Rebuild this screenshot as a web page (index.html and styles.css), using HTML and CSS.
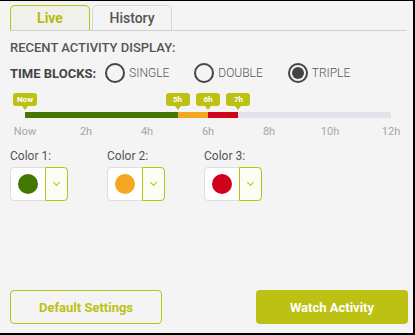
FILE: index.html
```html
<!DOCTYPE html>
<html lang="en">
  <head>
    <meta charset="UTF-8" />
    <meta name="viewport" content="width=device-width, initial-scale=1.0" />
    <title>Activity Display</title>
    <link rel="stylesheet" href="styles.css">
  </head>
  <body>
    <div class="panel">
      <div class="tabs">
        <div class="tab active">Live</div>
        <div class="tab">History</div>
      </div>

      <h3 class="section-title">RECENT ACTIVITY DISPLAY:</h3>

      <div class="blocks-row">
        <span class="blocks-label">TIME BLOCKS:</span>
        <label class="radio"><span class="circle"></span>SINGLE</label>
        <label class="radio"><span class="circle"></span>DOUBLE</label>
        <label class="radio checked"><span class="circle"></span>TRIPLE</label>
      </div>

      <div class="timeline">
        <div class="tags">
          <span class="tag" style="left: 0%">Now</span>
          <span class="tag" style="left: 41.667%">5h</span>
          <span class="tag" style="left: 50%">6h</span>
          <span class="tag" style="left: 58.333%">7h</span>
        </div>
        <div class="bar">
          <div class="seg green" style="width: 41.667%"></div>
          <div class="seg orange" style="width: 8.333%"></div>
          <div class="seg red" style="width: 8.333%"></div>
        </div>
        <div class="ticks">
          <span>Now</span>
          <span>2h</span>
          <span>4h</span>
          <span>6h</span>
          <span>8h</span>
          <span>10h</span>
          <span>12h</span>
        </div>
      </div>

      <div class="colors">
        <div class="color-group">
          <div class="color-label">Color 1:</div>
          <div class="picker">
            <div class="swatch"><span class="dot green"></span></div>
            <div class="drop"><span class="chev"></span></div>
          </div>
        </div>
        <div class="color-group">
          <div class="color-label">Color 2:</div>
          <div class="picker">
            <div class="swatch"><span class="dot orange"></span></div>
            <div class="drop"><span class="chev"></span></div>
          </div>
        </div>
        <div class="color-group">
          <div class="color-label">Color 3:</div>
          <div class="picker">
            <div class="swatch"><span class="dot red"></span></div>
            <div class="drop"><span class="chev"></span></div>
          </div>
        </div>
      </div>

      <div class="actions">
        <button class="btn outline">Default Settings</button>
        <button class="btn solid">Watch Activity</button>
      </div>
    </div>
  </body>
</html>
```

FILE: styles.css
```css
* {
  margin: 0;
  padding: 0;
  box-sizing: border-box;
}

body {
  font-family: Roboto, 'Liberation Sans', sans-serif;
  background-color: #f4f4f4;
  color: #555;
}

.panel {
  width: 415px;
  height: 335px;
  border-top: 1px solid #000;
  border-right: 2px solid #000;
  border-bottom: 2px solid #000;
  padding: 4px 5px 9px 10px;
  display: flex;
  flex-direction: column;
}

.tabs {
  display: flex;
  gap: 2px;
  border-bottom: 1px solid #d0d0d0;
  margin-right: 1px;
}

.tab {
  width: 80px;
  height: 25px;
  border: 1px solid #d6d6d6;
  border-bottom: none;
  border-radius: 5px 5px 0 0;
  font-size: 14px;
  font-weight: 500;
  color: #555;
  display: flex;
  align-items: center;
  justify-content: center;
}

.tab.active {
  border-color: #bdc114;
  border-width: 1.5px;
  background-color: #f0f1ea;
  color: #b5bb12;
  font-weight: 700;
}

.section-title {
  font-size: 13px;
  font-weight: 500;
  color: #555;
  margin-top: 9px;
}

.blocks-row {
  display: flex;
  align-items: center;
  margin-top: 8px;
  height: 20px;
}

.blocks-label {
  font-size: 13px;
  font-weight: 700;
  color: #444;
  margin-right: 9px;
}

.radio {
  display: flex;
  align-items: center;
  gap: 4px;
  font-size: 12px;
  font-weight: 300;
  color: #555;
  margin-right: 25px;
}

.circle {
  width: 20px;
  height: 20px;
  border: 2px solid #444;
  border-radius: 50%;
  display: flex;
  align-items: center;
  justify-content: center;
}

.radio.checked .circle::after {
  content: "";
  width: 12px;
  height: 12px;
  border-radius: 50%;
  background-color: #444;
}

.timeline {
  margin: 10px 17px 0 15px;
}

.tags {
  position: relative;
  height: 19px;
}

.tag {
  position: absolute;
  top: 0;
  transform: translateX(-50%);
  width: 24px;
  height: 13px;
  line-height: 13px;
  border-radius: 3px;
  background-color: #bdc114;
  color: #fff;
  font-size: 8px;
  font-weight: 700;
  text-align: center;
}

.tag::after {
  content: "";
  position: absolute;
  left: 50%;
  bottom: -4px;
  margin-left: -3px;
  border-left: 3px solid transparent;
  border-right: 3px solid transparent;
  border-top: 4px solid #bdc114;
}

.bar {
  display: flex;
  height: 6px;
  background-color: #e1e4e8;
}

.seg.green,
.dot.green {
  background-color: #437800;
}

.seg.orange,
.dot.orange {
  background-color: #f5a623;
}

.seg.red,
.dot.red {
  background-color: #d0021b;
}

.ticks {
  display: flex;
  margin: 7px -30.5px 0;
}

.ticks span {
  flex: none;
  width: 61px;
  text-align: center;
  font-size: 11px;
  color: #a6a6a6;
}

.colors {
  display: flex;
  gap: 39px;
  margin-top: 11px;
}

.color-label {
  font-size: 12px;
  color: #555;
}

.picker {
  display: flex;
  width: 58px;
  height: 34px;
  margin-top: 4px;
  border: 1px solid #ddd;
  border-radius: 4px;
  background-color: #fff;
}

.swatch {
  width: 34px;
  display: flex;
  align-items: center;
  justify-content: center;
}

.dot {
  width: 20px;
  height: 20px;
  border-radius: 50%;
}

.drop {
  flex: 1;
  margin: -1px -1px -1px 0;
  border: 1px solid #bdc114;
  border-radius: 0 4px 4px 0;
  background-color: #fbfcf3;
  display: flex;
  align-items: center;
  justify-content: center;
}

.chev {
  width: 5px;
  height: 5px;
  border-right: 1.2px solid #bdc114;
  border-bottom: 1.2px solid #bdc114;
  transform: rotate(45deg);
  margin-top: -3px;
}

.actions {
  display: flex;
  justify-content: space-between;
  margin-top: auto;
}

.btn {
  width: 152px;
  height: 34px;
  border-radius: 4px;
  font-family: Roboto, 'Liberation Sans', sans-serif;
  font-size: 13px;
  font-weight: 700;
  cursor: pointer;
}

.btn.outline {
  background-color: transparent;
  border: 1px solid #bdc114;
  color: #bdc114;
}

.btn.solid {
  background-color: #bdc114;
  border: none;
  color: #fff;
}
```
